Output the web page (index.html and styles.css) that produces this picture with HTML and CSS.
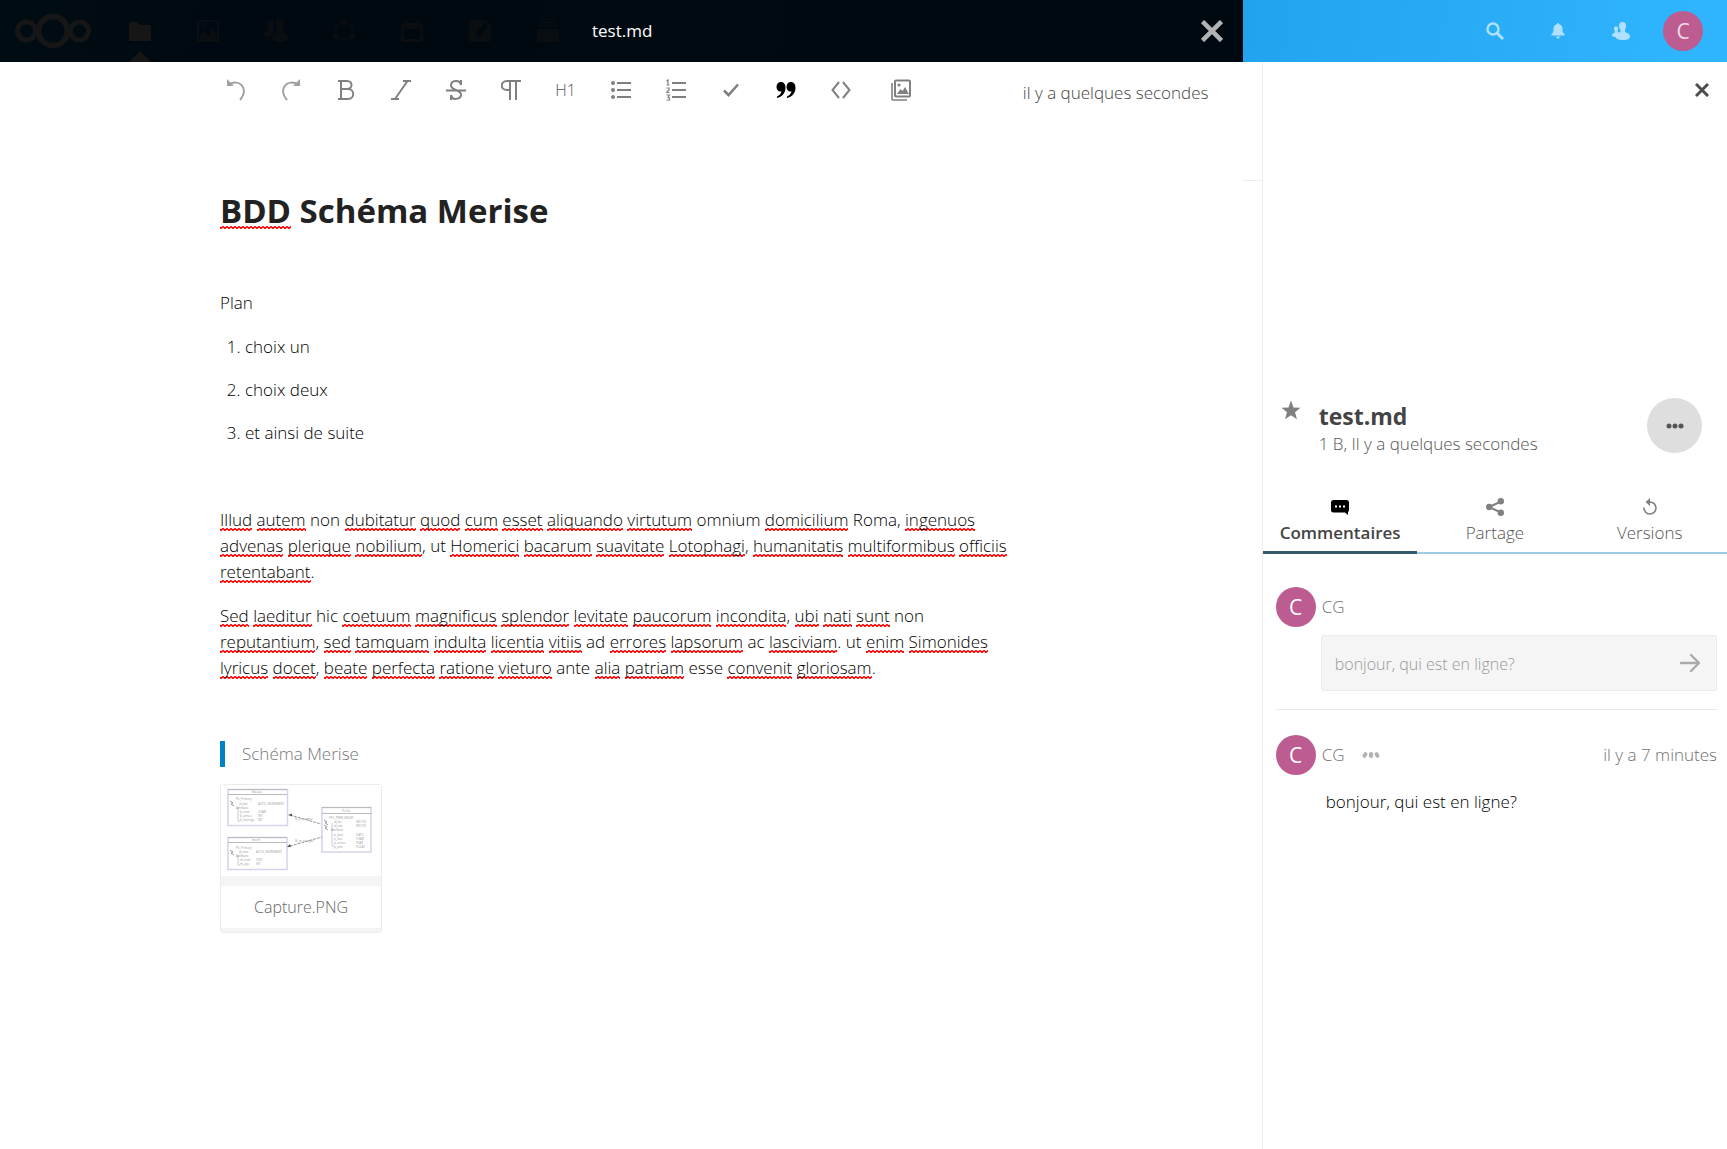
FILE: index.html
```
<!DOCTYPE html>
<html lang="fr">

<head>
    <meta charset="utf-8">
    <meta name="viewport" content="width=device-width, initial-scale=1">
    <title>test.md - Fichiers</title>
    <link rel="stylesheet" href="styles.css">
</head>

<body>

    <header class="header">
        <div class="header-left">
            <nav class="apps">
                <a class="logo" href="#" aria-label="Accueil">
                    <svg width="78" height="36" viewBox="0 0 78 36" fill="none" stroke="currentColor">
                        <circle cx="12.5" cy="18" r="9" stroke-width="5" />
                        <circle cx="39" cy="18" r="14.5" stroke-width="6" />
                        <circle cx="65.500" cy="18" r="9" stroke-width="5" />
                    </svg>
                </a>
                <a class="app active" href="#" aria-label="Fichiers">
                    <svg width="22" height="22" viewBox="0 0 22 22" fill="currentColor">
                        <path d="M1 2h7l3 3h10q1 0 1 1v14q0 1-1 1H1q-1 0-1-1V3q0-1 1-1z" />
                    </svg>
                </a>
                <a class="app" href="#" aria-label="Galerie">
                    <svg width="22" height="22" viewBox="0 0 22 22" fill="currentColor">
                        <path fill-rule="evenodd" d="M0 0h22v22H0zM2 2v16l5-7 4 5 5-8 4 7V2z" />
                        <circle cx="6" cy="6" r="2" />
                    </svg>
                </a>
                <a class="app" href="#" aria-label="Contacts">
                    <svg width="24" height="26" viewBox="0 0 24 24" fill="currentColor">
                        <path d="M16 0c3 0 4.500 2 4.500 5 0 3-1 4-1.500 5v3c2 1.500 5 2 5 5.500 0 3-2 4.500-8 4.500s-8-2-8-4.500C8 15 11 14.500 13 13v-3c-1-1-1.500-2-1.500-5 0-3 1.500-5 4.500-5z" />
                        <path d="M6.500 1C9 1 10 2.500 10 5c0 2-.5 3-1 4v2l2 2c-2 1-4 3-4 5-5 0-7-1-7-3 0-3 3-3 4.500-4V9c-1-1-1.500-2-1.500-4 0-2.500 1-4 3.500-4z" />
                    </svg>
                </a>
                <a class="app" href="#" aria-label="Cercles">
                    <svg width="24" height="26" viewBox="0 0 24 24" fill="currentColor">
                        <circle cx="12" cy="12" r="9" fill="none" stroke="currentColor" stroke-width="1.500" />
                        <circle cx="12" cy="3" r="3" />
                        <circle cx="4" cy="17" r="3" />
                        <circle cx="20" cy="17" r="3" />
                    </svg>
                </a>
                <a class="app" href="#" aria-label="Agenda">
                    <svg width="22" height="24" viewBox="0 0 22 24" fill="currentColor">
                        <path fill-rule="evenodd" d="M4 1h3v3h8V1h3v3h2q2 0 2 2v15q0 2-2 2H2q-2 0-2-2V6q0-2 2-2h2zM3 10v10h16V10z" />
                    </svg>
                </a>
                <a class="app" href="#" aria-label="Notes">
                    <svg width="22" height="24" viewBox="0 0 22 24" fill="currentColor">
                        <path fill-rule="evenodd" d="M3 1h12l4 2 3 4v13q0 3-3 3H3q-3 0-3-3V4q0-3 3-3zM6 18l5-1 8-10-3-3-8 9z" />
                    </svg>
                </a>
                <a class="app" href="#" aria-label="Deck">
                    <svg width="22" height="26" viewBox="0 0 22 24" fill="currentColor">
                        <path d="M5 0h12v1H5zM4 3h14v1H4zM2 6h18v1.500H2zM1 10h20q1 0 1 1v11q0 1-1 1H1q-1 0-1-1V11q0-1 1-1z" />
                    </svg>
                </a>
            </nav>
            <span class="file-title">test.md</span>
            <button class="viewer-close" aria-label="Fermer">
                <svg width="22" height="22" viewBox="0 0 22 22" stroke="currentColor" stroke-width="4.500">
                    <path d="M1.500 1.500l19 19M20.500 1.500l-19 19" />
                </svg>
            </button>
        </div>
        <div class="header-right">
            <button class="head-btn" aria-label="Rechercher">
                <svg width="18" height="18" viewBox="0 0 18 18" fill="none" stroke="currentColor">
                    <circle cx="7" cy="7" r="5.500" stroke-width="2.400" />
                    <path d="M10.500 10.500l6.500 6.500" stroke-width="3" />
                </svg>
            </button>
            <button class="head-btn" aria-label="Notifications">
                <svg width="16" height="16" viewBox="0 0 16 16" fill="currentColor">
                    <path d="M8 0q1 0 1.200 1.200C12 2 12.500 4 12.500 6c0 3 .5 4 2 5v1.500h-13V11c1.500-1 2-2 2-5 0-2 .5-4 3.300-4.800Q7 0 8 0zM5.500 13.500h5L8 16z" />
                </svg>
            </button>
            <button class="head-btn" aria-label="Contacts">
                <svg width="18" height="18" viewBox="0 0 18 18" fill="currentColor">
                    <path d="M10.500 0C13 0 14 1.500 14 4c0 2.500-.7 3-1 4v2c2 1 5 1.500 5 4.500 0 2.500-2 3.500-7.500 3.500-4 0-6.500-1-7-3-2 0-3.500-.5-3.500-2s2-2 2.800-2.500V9C2 8 2 7.500 2 6.500 2 5 2.500 4.500 4 4.500S6 5 6 6.500c0 1 0 1.500-.5 2.500l1 1.500L8.500 10V8C8 7 7 6.500 7 4c0-2.500 1-4 3.500-4z" />
                </svg>
            </button>
            <button class="avatar user" aria-label="Compte">C</button>
        </div>
    </header>

    <div class="content">
        <main class="editor">
            <div class="toolbar">
                <button aria-label="Annuler" class="soft">
                    <svg width="20" height="22" viewBox="0 0 20 22" fill="none" stroke="currentColor" stroke-width="2">
                        <path d="M3 5.500C13-1 24 10 14 21" />
                        <path d="M1 0v7h7z" fill="currentColor" stroke="none" />
                    </svg>
                </button>
                <button aria-label="Rétablir" class="soft">
                    <svg width="20" height="22" viewBox="0 0 20 22" fill="none" stroke="currentColor" stroke-width="2">
                        <path d="M17 5.500C7-1-4 10 6 21" />
                        <path d="M19 0v7h-7z" fill="currentColor" stroke="none" />
                    </svg>
                </button>
                <button aria-label="Gras">
                    <svg width="20" height="22" viewBox="0 0 20 22" fill="none" stroke="currentColor" stroke-width="2">
                        <path d="M2 2h9c6 0 6 8 0 8H5h7c7 0 7 10 0 10H2M5 2v18" />
                    </svg>
                </button>
                <button aria-label="Italique">
                    <svg width="20" height="22" viewBox="0 0 20 22" fill="none" stroke="currentColor" stroke-width="2">
                        <path d="M12 2h8M0 20h8M16.500 2L4 20" />
                    </svg>
                </button>
                <button aria-label="Barré">
                    <svg width="20" height="22" viewBox="0 0 20 22" fill="none" stroke="currentColor" stroke-width="2">
                        <path d="M15 1v5M5 21v-5M15 6C14 0 5 1 5 6.500c0 5 10 4 10 9S6 22 5 16M0 11.500h20" />
                    </svg>
                </button>
                <button aria-label="Paragraphe">
                    <svg width="20" height="22" viewBox="0 0 20 22" fill="none" stroke="currentColor" stroke-width="2">
                        <path d="M20 2H6C-1 2-1 11 6 11h3M9 2v19M15 2v19" />
                    </svg>
                </button>
                <button class="heading">H1</button>
                <button aria-label="Liste à puces">
                    <svg width="20" height="22" viewBox="0 0 20 22" fill="currentColor">
                        <path d="M6 3h14v2H6zM6 10h14v2H6zM6 17h14v2H6z" />
                        <circle cx="2" cy="4" r="2" />
                        <circle cx="2" cy="11" r="2" />
                        <circle cx="2" cy="18" r="2" />
                    </svg>
                </button>
                <button aria-label="Liste numérotée">
                    <svg width="20" height="22" viewBox="0 0 20 22" fill="none" stroke="currentColor">
                        <path d="M6 4h14M6 11h14M6 18h14" stroke-width="2" />
                        <path d="M.5 2L2 1v5M.5 6h3M.5 9h2.500v2L.5 13.500h3M.5 16h3l-1.500 2.500L3.500 19v2H.5" stroke-width="1.200" />
                    </svg>
                </button>
                <button aria-label="Tâche">
                    <svg width="16" height="16" viewBox="0 0 16 16" fill="none" stroke="currentColor" stroke-width="2.600">
                        <path d="M1 8.500L5.500 13 15 2.500" />
                    </svg>
                </button>
                <button aria-label="Citation" class="on">
                    <svg width="20" height="18" viewBox="0 0 20 18" fill="currentColor">
                        <path d="M5 1c3 0 4.500 2.500 4.500 6C9.500 12 6 16 1 17v-1.500c2.500-1 4-3 4.500-5C2.500 11 .5 9 .5 6S2 1 5 1zM15 1c3 0 4.500 2.500 4.500 6 0 5-3.500 9-8.500 10v-1.500c2.500-1 4-3 4.500-5-3 .5-5-1.500-5-4.500s1.500-5 4.500-5z" />
                    </svg>
                </button>
                <button aria-label="Code">
                    <svg width="20" height="18" viewBox="0 0 20 18" fill="none" stroke="currentColor" stroke-width="2">
                        <path d="M8 1L1.500 9 8 17M12 1l6.500 8L12 17" />
                    </svg>
                </button>
                <button aria-label="Image" class="image-btn">
                    <svg width="20" height="22" viewBox="0 0 20 22" fill="none" stroke="currentColor">
                        <path d="M1 4v16q0 1 1 1h14" stroke-width="1.600" />
                        <rect x="4" y="1.500" width="15" height="16" rx="1" stroke-width="2" />
                        <path d="M6 15l3.500-5 2 2L14 8l4 7z" fill="currentColor" stroke="none" />
                        <circle cx="8" cy="6" r="1.600" fill="currentColor" stroke="none" />
                    </svg>
                </button>
                <span class="saved">il y a quelques secondes</span>
            </div>

            <article class="doc">
                <h1><u>BDD</u> Schéma Merise</h1>
                <p>Plan</p>
                <ol>
                    <li>choix un</li>
                    <li>choix deux</li>
                    <li>et ainsi de suite</li>
                </ol>
                <p><u>Illud</u> <u>autem</u> non <u>dubitatur</u> <u>quod</u> <u>cum</u> <u>esset</u> <u>aliquando</u>
                    <u>virtutum</u> omnium <u>domicilium</u> Roma, <u>ingenuos</u> <u>advenas</u> <u>plerique</u>
                    <u>nobilium</u>, ut <u>Homerici</u> <u>bacarum</u> <u>suavitate</u> <u>Lotophagi</u>,
                    <u>humanitatis</u> <u>multiformibus</u> <u>officiis</u> <u>retentabant</u>.</p>
                <p><u>Sed</u> <u>laeditur</u> hic <u>coetuum</u> <u>magnificus</u> <u>splendor</u> <u>levitate</u>
                    <u>paucorum</u> <u>incondita</u>, <u>ubi</u> <u>nati</u> <u>sunt</u> non <u>reputantium</u>,
                    <u>sed</u> <u>tamquam</u> <u>indulta</u> <u>licentia</u> <u>vitiis</u> ad <u>errores</u>
                    <u>lapsorum</u> ac <u>lasciviam</u>. ut <u>enim</u> <u>Simonides</u> <u>lyricus</u>
                    <u>docet</u>, <u>beate</u> <u>perfecta</u> <u>ratione</u> <u>vieturo</u> ante <u>alia</u>
                    <u>patriam</u> esse <u>convenit</u> <u>gloriosam</u>.</p>
                <blockquote>Schéma Merise</blockquote>
                <figure class="capture">
                    <svg class="schema" viewBox="0 0 160 91" fill="none">
                        <g fill="#fff" stroke="#d4d4ea">
                            <rect x="7" y="4.500" width="59.500" height="36" stroke-width="1.500" />
                            <rect x="7" y="52.500" width="59" height="32" stroke-width="1.500" />
                            <rect x="101" y="22.500" width="49" height="44.500" stroke-width="1.500" />
                        </g>
                        <path d="M7 4.500h59M7 9.500h59M7 52.500h59M7 57.500h59M101 22.500h49M101 28.500h49" stroke="#bbb" />
                        <path d="M69 30l31 9M69 61l32-9" stroke="#999" stroke-dasharray="3 1" />
                        <path d="M67 30l4-1.500v3zM66 62l3-3 1 3z" fill="#555" />
                        <path d="M9 16l3 2-2 1 3 2M9 65l3 2-2 1 3 2M103 35l3 2-2 1 3 2M103 40l3 2-2 1 3 2" stroke="#999" />
                        <path d="M17 22v14h2M17 70v10h2M111 38v23h2" stroke="#ccc" />
                        <g class="schema-text">
                            <text x="31" y="8">Bateau</text>
                            <text x="15" y="15">Pk_Primary</text>
                            <text x="18" y="20">id_bat</text>
                            <text x="37" y="20">AUTO_INCREMENT</text>
                            <text x="15" y="24">Attributs</text>
                            <text x="19" y="28">b_nom</text>
                            <text x="37" y="28">CHAR</text>
                            <text x="19" y="32">b_annee</text>
                            <text x="37" y="32">INT</text>
                            <text x="19" y="36">b_tonnage</text>
                            <text x="37" y="36">INT</text>
                            <text x="31" y="56">marin</text>
                            <text x="15" y="64">Pk_Primary</text>
                            <text x="18" y="68">id_mar</text>
                            <text x="35" y="68">AUTO_INCREMENT</text>
                            <text x="15" y="72">Attributs</text>
                            <text x="19" y="76">m_nom</text>
                            <text x="35" y="76">TEXT</text>
                            <text x="19" y="80">m_age</text>
                            <text x="35" y="80">INT</text>
                            <text x="74" y="35">fk_b_navigue</text>
                            <text x="74" y="57">fk_m_navigue</text>
                            <text x="121" y="27">Peche</text>
                            <text x="108" y="34">PK1_PRIM_ENUM</text>
                            <text x="113" y="38">id_ba</text>
                            <text x="135" y="38">INT(10)</text>
                            <text x="113" y="42">id_ma</text>
                            <text x="135" y="42">INT(10)</text>
                            <text x="110" y="46">Attributs</text>
                            <text x="113" y="51">p_date</text>
                            <text x="135" y="51">DATE</text>
                            <text x="113" y="55">p_lieu</text>
                            <text x="135" y="55">CHAR</text>
                            <text x="113" y="59">p_annee</text>
                            <text x="135" y="59">YEAR</text>
                            <text x="113" y="63">p_prix</text>
                            <text x="135" y="63">FLOAT</text>
                        </g>
                    </svg>
                    <figcaption>Capture.PNG</figcaption>
                </figure>
            </article>
        </main>

        <div class="gutter"></div>

        <aside class="sidebar">
            <button class="side-close" aria-label="Fermer">
                <svg width="14" height="14" viewBox="0 0 14 14" stroke="currentColor" stroke-width="3">
                    <path d="M1 1l12 12M13 1L1 13" />
                </svg>
            </button>
            <div class="file-head">
                <svg class="star" width="20" height="20" viewBox="0 0 20 20" fill="currentColor">
                    <path d="M10 .5l2.500 6.900 7 .3-5.500 4.500 2 7L10 15.200l-6 4 2-7L.5 7.700l7-.3z" />
                </svg>
                <div class="file-info">
                    <h2>test.md</h2>
                    <p>1 B, Il y a quelques secondes</p>
                </div>
                <button class="more" aria-label="Actions">
                    <svg width="18" height="6" viewBox="0 0 18 6" fill="currentColor">
                        <circle cx="3" cy="3" r="2.500" />
                        <circle cx="9" cy="3" r="2.500" />
                        <circle cx="15" cy="3" r="2.500" />
                    </svg>
                </button>
            </div>
            <nav class="tabs">
                <a class="tab selected" href="#">
                    <svg width="18" height="18" viewBox="0 0 18 18">
                        <path d="M2.500 2h13Q18 2 18 4.500v7q0 2-1 2.500v3l-3-2.500H2.500Q0 14.500 0 12V4.500Q0 2 2.500 2z" />
                        <path d="M4 7.500h2v2H4zM8 7.500h2v2H8zM12 7.500h2v2h-2z" fill="#fff" />
                    </svg>
                    Commentaires
                </a>
                <a class="tab" href="#">
                    <svg width="18" height="18" viewBox="0 0 18 18" fill="#808080">
                        <path d="M15 3.500L3 9l12 5.500" fill="none" stroke="#808080" stroke-width="2" />
                        <circle cx="3.200" cy="9" r="3.200" />
                        <circle cx="14.800" cy="3.300" r="3.200" />
                        <circle cx="14.800" cy="14.700" r="3.200" />
                    </svg>
                    Partage
                </a>
                <a class="tab" href="#">
                    <svg width="18" height="18" viewBox="0 0 18 18" fill="none" stroke="#808080" stroke-width="1.600">
                        <path d="M3 9.500a6 6 0 1 0 6-5.500H7" />
                        <path d="M9 0v8L4.500 4z" fill="#808080" stroke="none" />
                    </svg>
                    Versions
                </a>
            </nav>

            <section class="comments">
                <div class="author">
                    <span class="avatar">C</span>
                    <span>CG</span>
                </div>
                <form class="new-comment">
                    <input type="text" aria-label="Nouveau commentaire" value="bonjour, qui est en ligne?" disabled>
                    <button type="button" aria-label="Envoyer">
                        <svg width="20" height="20" viewBox="0 0 20 20" fill="none" stroke="currentColor" stroke-width="2.400" stroke-linecap="round" stroke-linejoin="round">
                            <path d="M1 10h17M11 2l8 8-8 8" />
                        </svg>
                    </button>
                </form>
                <hr>
                <div class="author">
                    <span class="avatar">C</span>
                    <span>CG</span>
                    <button class="comment-more" aria-label="Actions du commentaire">
                        <svg width="18" height="6" viewBox="0 0 18 6" fill="currentColor">
                            <ellipse cx="3" cy="3" rx="2" ry="3" transform="rotate(30 3 3)" />
                            <ellipse cx="9" cy="3" rx="2.200" ry="3" />
                            <ellipse cx="15" cy="3" rx="2" ry="3" transform="rotate(-30 15 3)" />
                        </svg>
                    </button>
                    <time>il y a 7 minutes</time>
                </div>
                <p class="message">bonjour, qui est en ligne?</p>
            </section>
        </aside>
    </div>

</body>

</html>
```
FILE: styles.css
```
* {
    box-sizing: border-box;
}

body {
    margin: 0;
    min-height: 100vh;
    display: flex;
    flex-direction: column;
    background-color: #fff;
    color: #000;
    font-family: "Open Sans", "Noto Sans", sans-serif;
    font-size: 17px;
    font-weight: 300;
    line-height: 26px;
}

button {
    padding: 0;
    border: none;
    background: none;
    color: inherit;
    font: inherit;
    cursor: pointer;
}

a {
    color: inherit;
    text-decoration: none;
}

svg {
    display: block;
}

/* header */
.header {
    display: flex;
    height: 62px;
}

.header-left {
    width: 72%;
    display: flex;
    align-items: center;
    padding-right: 20px;
    background: linear-gradient(100deg, #000c13, #000810 25%, #000a10 50%, #000810);
    color: #fff;
}

.apps {
    display: flex;
    align-items: center;
    height: 100%;
    color: #0a0e11;
}

.logo {
    margin: 0 14px;
    color: #161616;
}

.app {
    position: relative;
    display: flex;
    align-items: center;
    justify-content: center;
    width: 68px;
    height: 62px;
}

.app.active {
    color: #161616;
}

/* little arrow under the current app */
.app.active::after {
    content: "";
    position: absolute;
    bottom: 0;
    left: 50%;
    margin-left: -11px;
    border: 11px solid transparent;
    border-top: none;
    border-bottom-color: #161616;
}

.file-title {
    margin-left: 10px;
    font-weight: 400;
}

.viewer-close {
    margin-left: auto;
    color: #b3b3b3;
}

.header-right {
    flex: 1;
    display: flex;
    align-items: center;
    justify-content: flex-end;
    padding-right: 24px;
    background: linear-gradient(100deg, #22a3ee, #30b6ff);
}

.head-btn {
    display: flex;
    justify-content: center;
    width: 63px;
    color: #b0e0ff;
}

.avatar {
    width: 40px;
    height: 40px;
    border-radius: 50%;
    background-color: #bc5c91;
    color: #fff;
    font-size: 21px;
    font-weight: 400;
    line-height: 40px;
    text-align: center;
}

.avatar.user {
    margin-left: 11px;
    color: #f0dce8;
}

/* editor */
.content {
    flex: 1;
    display: flex;
}

.editor {
    width: 72%;
}

.gutter {
    flex: 1;
    height: 119px;
    border-bottom: 1px solid #ededed;
}

.toolbar {
    display: flex;
    align-items: center;
    height: 56px;
    padding: 0 35px 0 208px;
    color: #808080;
}

.toolbar button {
    display: flex;
    justify-content: center;
    width: 55px;
}

.toolbar .soft {
    color: #a0a0a0;
}

.toolbar .on {
    color: #000;
}

.toolbar .heading {
    color: #555;
    font-size: 16px;
}

.toolbar .image-btn {
    width: 65px;
}

.saved {
    margin-left: auto;
    padding-top: 5px;
    color: #444;
}

.doc {
    padding: 66px 220px 0;
}

.doc h1 {
    margin: 0 0 52px;
    color: #222;
    font-size: 33px;
    font-weight: 700;
    line-height: 54px;
}

.doc p {
    margin: 0 0 18px;
}

.doc ol {
    margin: 0 0 61px;
    padding-left: 25px;
}

.doc li {
    margin-bottom: 17px;
}

/* misspelled words */
.doc u {
    text-decoration: none;
    background: url("data:image/svg+xml,%3Csvg xmlns='http://www.w3.org/2000/svg' width='4' height='3'%3E%3Cpath d='M-1 .5L1 2.5 3 .5 5 2.5' fill='none' stroke='red' stroke-width='1.4'/%3E%3C/svg%3E") repeat-x left bottom;
}

.doc h1 u {
    background-position: left bottom 4px;
}

.doc blockquote {
    margin: 60px 0 17px;
    padding-left: 17px;
    border-left: 5px solid #0082c9;
    color: #777;
}

.capture {
    width: 162px;
    margin: 0;
    padding-bottom: 4px;
    border: 1px solid #ededed;
    border-radius: 3px;
    background-color: #f5f5f5;
}

.schema {
    width: 100%;
    margin-bottom: 10px;
    background-color: #fff;
}

.schema-text {
    fill: #999;
    font-size: 3px;
    font-weight: 400;
}

.capture figcaption {
    border-radius: 3px;
    background-color: #fff;
    color: #666;
    font-size: 16px;
    line-height: 42px;
    text-align: center;
}

/* sidebar */
.sidebar {
    width: calc(27% - 1px);
    border-left: 1px solid #ededed;
}

.side-close {
    display: block;
    margin: 21px 18px 0 auto;
    color: #4d4d4d;
}

.file-head {
    display: flex;
    margin-top: 301px;
    padding: 0 25px 0 18px;
}

.star {
    margin-top: 2px;
    color: #808080;
}

.file-info {
    flex: 1;
    margin-left: 18px;
    color: #555;
}

.file-info h2 {
    margin: 3px 0 0;
    color: #444;
    font-size: 23px;
    font-weight: 700;
    line-height: 30px;
}

.file-info p {
    margin: 0;
}

.more {
    display: flex;
    align-items: center;
    justify-content: center;
    width: 55px;
    height: 55px;
    border-radius: 50%;
    background-color: #dedede;
    color: #555;
}

.tabs {
    display: flex;
    margin-top: 41px;
}

.tab {
    flex: 1;
    display: flex;
    flex-direction: column;
    align-items: center;
    gap: 4px;
    padding-bottom: 6px;
    border-bottom: 2px solid #9fcde6;
    color: #555;
}

.tab.selected {
    border-bottom: 3px solid #35596c;
    padding-bottom: 5px;
    color: #444;
    font-weight: 600;
}

.comments {
    padding: 33px 10px 0 13px;
}

.author {
    display: flex;
    align-items: center;
    gap: 6px;
    color: #707070;
}

.author time {
    margin-left: auto;
}

.comment-more {
    margin-left: 11px;
    color: #b3b3b3;
}

.new-comment {
    display: flex;
    align-items: center;
    height: 56px;
    margin: 8px 0 18px 45px;
    padding: 0 16px 0 13px;
    border: 1px solid #ebebeb;
    border-radius: 3px;
    background-color: #f5f5f5;
    color: #aaa;
}

.new-comment input {
    flex: 1;
    min-width: 0;
    padding: 2px 0 0;
    border: none;
    background: none;
    color: #999;
    font: inherit;
    font-size: 16px;
}

.comments hr {
    margin: 0 0 25px;
    border: none;
    border-top: 1px solid #ebebeb;
}

.message {
    margin: 14px 0 0 50px;
}
```
